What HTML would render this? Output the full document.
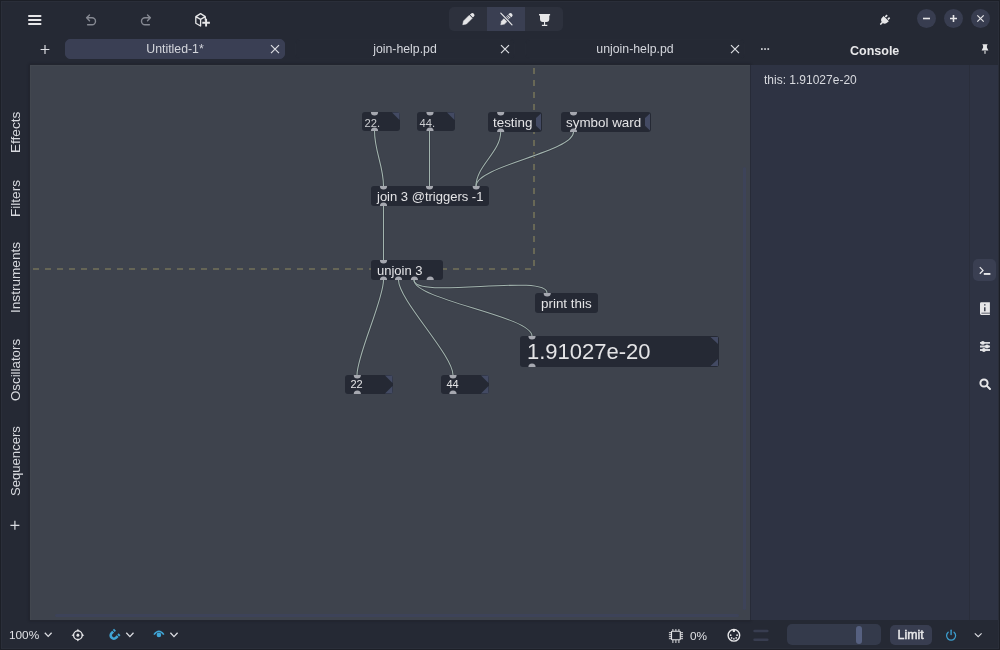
<!DOCTYPE html>
<html><head><meta charset="utf-8">
<style>
*{margin:0;padding:0;box-sizing:border-box}
html,body{width:1000px;height:650px;overflow:hidden;background:#252934;-webkit-font-smoothing:antialiased;font-family:"Liberation Sans",sans-serif;color:#e2e2e4}
.abs{position:absolute;white-space:nowrap}
#frame{position:absolute;left:0;top:0;width:1000px;height:650px;border:1px solid #1c1f27;box-shadow:inset 0 0 0 1px #2a2e39;pointer-events:none}
.tab{position:absolute;top:39px;height:20px;border-radius:5px;font-size:12.3px;line-height:18px;text-align:center;color:#d4d6dc}
.tab.act{background:#3a3f54}
.vt{position:absolute;font-size:13.6px;line-height:13px;color:#d8dadf;transform:rotate(-90deg);transform-origin:0 0;white-space:nowrap}
.obj{position:absolute;background:#252934;border-radius:3px;font-size:13px;color:#e4e4e6;white-space:nowrap}
svg{position:absolute;left:0;top:0}
</style></head><body><div id="root" style="position:absolute;left:0;top:0;width:1000px;height:650px;will-change:transform">
<!-- canvas -->
<div class="abs" style="left:30px;top:65px;width:720px;height:555px;background:#3e434d;box-shadow:0 0 0 1px #22252f,0 0 2px 1px rgba(20,22,30,.5),inset 1px 1px 0 #42474f"></div>
<!-- console -->
<div class="abs" style="left:750px;top:65px;width:220px;height:555px;background:#2e3343;box-shadow:inset 1px 0 0 #272b38"></div>
<div class="abs" style="left:969px;top:65px;width:31px;height:555px;background:#2e3343;border-left:1px solid #2a2e3b"></div>
<!-- scrollbars -->
<div class="abs" style="left:743px;top:167px;width:3px;height:443px;border-radius:2px;background:#3d4359"></div>
<div class="abs" style="left:55px;top:614px;width:684px;height:3px;border-radius:2px;background:#3d4359"></div>

<!-- mode group -->
<div class="abs" style="left:449px;top:7px;width:114px;height:24px;border-radius:5px;background:#2d313d"></div>
<div class="abs" style="left:487px;top:7px;width:38px;height:24px;background:#3a3f52"></div>
<!-- window buttons -->
<div class="abs" style="left:917px;top:9px;width:19px;height:19px;border-radius:50%;background:#383d50"></div>
<div class="abs" style="left:944px;top:9px;width:19px;height:19px;border-radius:50%;background:#383d50"></div>
<div class="abs" style="left:971px;top:9px;width:19px;height:19px;border-radius:50%;background:#383d50"></div>

<!-- tabs -->
<div class="tab act" style="left:65px;width:220px;border:1px solid #3a3f54">Untitled-1*</div>
<div class="tab" style="left:295px;width:220px;border:1px solid #262a35">join-help.pd</div>
<div class="tab" style="left:525px;width:220px;border:1px solid #262a35">unjoin-help.pd</div>

<!-- sidebar -->
<div class="vt" style="top:153px;left:8.5px">Effects</div>
<div class="vt" style="top:217px;left:8.5px">Filters</div>
<div class="vt" style="top:313px;left:8.5px">Instruments</div>
<div class="vt" style="top:401px;left:8.5px;font-size:13.3px">Oscillators</div>
<div class="vt" style="top:496px;left:8.5px;font-size:13.1px">Sequencers</div>

<!-- console -->
<div class="abs" style="left:850px;top:43.5px;font-size:12.5px;font-weight:bold;color:#e8e8ea">Console</div>
<div class="abs" style="left:764px;top:73px;font-size:12px;color:#d8dadf">this: 1.91027e-20</div>

<!-- right strip active -->
<div class="abs" style="left:973px;top:259px;width:23px;height:22px;border-radius:5px;background:#3a3f52"></div>

<!-- status -->
<div class="abs" style="left:9px;top:628px;font-size:11.8px;color:#dfe0e4">100%</div>
<div class="abs" style="left:690px;top:629px;font-size:11.8px;color:#dfe0e4">0%</div>
<div class="abs" style="left:787px;top:624px;width:94px;height:21px;border-radius:5px;background:#343a4b"></div>
<div class="abs" style="left:856px;top:626px;width:6px;height:18px;border-radius:3px;background:#566080"></div>
<div class="abs" style="left:890px;top:625px;width:42px;height:20px;border-radius:5px;background:#383d50"></div>
<div class="abs" style="left:897.5px;top:628px;font-size:12.4px;-webkit-text-stroke:0.45px #e8e8ea;color:#e8e8ea">Limit</div>

<svg width="1000" height="650" viewBox="0 0 1000 650">
 <!-- dashed border -->
 <path d="M30 269 H534 V65" fill="none" stroke="#737259" stroke-width="1.6" stroke-dasharray="6 6" stroke-dashoffset="9"/>
 <!-- cords -->
 <g fill="none" stroke-linecap="round">
  <g stroke="#363a44" stroke-width="2.4">
   <path d="M374.5 131 C374.5 151 383.5 166 383.5 186"/>
   <path d="M429.5 131 V186"/>
   <path d="M500.7 132 C500.7 152 476 166 476 186"/>
   <path d="M573.5 132 C573.5 152 476 166 476 186"/>
   <path d="M383.5 206 V260"/>
   <path d="M383.5 280 C383.5 300 357 355 357 375"/>
   <path d="M398.5 280 C398.5 300 453 355 453 375"/>
   <path d="M414 280 C414 300 547 273 547 293"/>
   <path d="M414 280 C414 300 532 316 532 336"/>
  </g>
  <g stroke="#a2b4ae" stroke-width="1.05">
   <path d="M374.5 131 C374.5 151 383.5 166 383.5 186"/>
   <path d="M429.5 131 V186"/>
   <path d="M500.7 132 C500.7 152 476 166 476 186"/>
   <path d="M573.5 132 C573.5 152 476 166 476 186"/>
   <path d="M383.5 206 V260"/>
   <path d="M383.5 280 C383.5 300 357 355 357 375"/>
   <path d="M398.5 280 C398.5 300 453 355 453 375"/>
   <path d="M414 280 C414 300 547 273 547 293"/>
   <path d="M414 280 C414 300 532 316 532 336"/>
  </g>
 </g>
 </svg>
<!-- patch objects -->
<div class="obj" style="left:362px;top:112px;width:38px;height:19px"></div>
<div class="obj" style="left:417px;top:112px;width:38px;height:19px"></div>
<div class="obj" style="left:488px;top:112px;width:54px;height:20px"></div>
<div class="obj" style="left:561px;top:112px;width:90px;height:20px"></div>
<div class="obj" style="left:371px;top:186px;width:118px;height:20px"></div>
<div class="obj" style="left:371px;top:260px;width:72px;height:20px"></div>
<div class="obj" style="left:535px;top:293px;width:63px;height:20px"></div>
<div class="obj" style="left:520px;top:336px;width:199px;height:31px"></div>
<div class="obj" style="left:345px;top:375px;width:48px;height:19px"></div>
<div class="obj" style="left:441px;top:375px;width:48px;height:19px"></div>

<div class="abs" style="left:364.5px;top:116.5px;font-size:11.2px;color:#cbccd0">22.</div>
<div class="abs" style="left:419.5px;top:116.5px;font-size:11.2px;color:#cbccd0">44.</div>
<div class="abs" style="left:493px;top:115px;font-size:13.4px;color:#e4e4e6">testing</div>
<div class="abs" style="left:566px;top:115px;font-size:13.4px;color:#e4e4e6">symbol ward</div>
<div class="abs" style="left:377px;top:189px;font-size:13px;color:#e4e4e6">join 3 @triggers -1</div>
<div class="abs" style="left:377px;top:263px;font-size:13px;color:#e4e4e6">unjoin 3</div>
<div class="abs" style="left:541px;top:296px;font-size:13.4px;color:#e4e4e6">print this</div>
<div class="abs" style="left:527px;top:339px;font-size:22px;color:#e4e4e6">1.91027e-20</div>
<div class="abs" style="left:350.5px;top:378px;font-size:11px;color:#e4e4e6">22</div>
<div class="abs" style="left:446.5px;top:378px;font-size:11px;color:#e4e4e6">44</div>



<svg width="1000" height="650" viewBox="0 0 1000 650">
 <g fill="#a6a8b0">
  <path d="M370.9 112 h7.2 a3.6 3.6 0 0 1 -7.2 0z"/><path d="M370.9 131 h7.2 a3.6 3.6 0 0 0 -7.2 0z"/><path d="M426.4 112 h7.2 a3.6 3.6 0 0 1 -7.2 0z"/><path d="M426.4 131 h7.2 a3.6 3.6 0 0 0 -7.2 0z"/><path d="M497.1 112 h7.2 a3.6 3.6 0 0 1 -7.2 0z"/><path d="M497.1 132 h7.2 a3.6 3.6 0 0 0 -7.2 0z"/><path d="M569.9 112 h7.2 a3.6 3.6 0 0 1 -7.2 0z"/><path d="M569.9 132 h7.2 a3.6 3.6 0 0 0 -7.2 0z"/><path d="M379.9 186 h7.2 a3.6 3.6 0 0 1 -7.2 0z"/><path d="M425.9 186 h7.2 a3.6 3.6 0 0 1 -7.2 0z"/><path d="M472.6 186 h7.2 a3.6 3.6 0 0 1 -7.2 0z"/><path d="M379.9 206 h7.2 a3.6 3.6 0 0 0 -7.2 0z"/><path d="M379.9 260 h7.2 a3.6 3.6 0 0 1 -7.2 0z"/><path d="M379.9 280 h7.2 a3.6 3.6 0 0 0 -7.2 0z"/><path d="M394.9 280 h7.2 a3.6 3.6 0 0 0 -7.2 0z"/><path d="M410.8 280 h7.2 a3.6 3.6 0 0 0 -7.2 0z"/><path d="M426.6 280 h7.2 a3.6 3.6 0 0 0 -7.2 0z"/><path d="M543.6 293 h7.2 a3.6 3.6 0 0 1 -7.2 0z"/><path d="M528.4 336 h7.2 a3.6 3.6 0 0 1 -7.2 0z"/><path d="M528.4 367 h7.2 a3.6 3.6 0 0 0 -7.2 0z"/><path d="M353.7 375 h7.2 a3.6 3.6 0 0 1 -7.2 0z"/><path d="M353.7 394 h7.2 a3.6 3.6 0 0 0 -7.2 0z"/><path d="M449.4 375 h7.2 a3.6 3.6 0 0 1 -7.2 0z"/><path d="M449.4 394 h7.2 a3.6 3.6 0 0 0 -7.2 0z"/>
 </g>
 <!-- atom triangles -->
 <g fill="#434a63">
  <path d="M392 112.5 H399.5 V120 Z"/>
  <path d="M447 112.5 H454.5 V120 Z"/>
  <path d="M541 113.6 L536 118 V125.8 L541 130.4 Z"/>
  <path d="M650 113.6 L645 118 V125.8 L650 130.4 Z"/>
  <path d="M710.5 337 H718 V344 Z"/>
  <path d="M718 359 V366 H710.5 Z"/>
  <path d="M385 375.5 H392.5 V383 Z"/>
  <path d="M392.5 386 V393.5 H385 Z"/>
  <path d="M481 375.5 H488.5 V383 Z"/>
  <path d="M488.5 386 V393.5 H481 Z"/>
 </g>
 <!-- hamburger -->
 <g stroke="#e6e6e8" stroke-width="2" stroke-linecap="round">
  <path d="M29 16 H40.5 M29 20 H40.5 M29 24 H40.5"/>
 </g>
 <!-- undo / redo -->
 <g fill="none" stroke="#868992" stroke-width="1.4" stroke-linecap="round" stroke-linejoin="round">
  <path d="M89.5 14.9 L86.6 17.8 L89.5 20.7 M86.6 17.8 H92 A3.5 3.5 0 0 1 92 24.8 H87.6"/>
  <path d="M147.5 14.9 L150.4 17.8 L147.5 20.7 M150.4 17.8 H145 A3.5 3.5 0 0 0 145 24.8 H149.4"/>
 </g>
 <!-- add object -->
 <g fill="none" stroke="#e6e6e8" stroke-width="1.3" stroke-linejoin="round">
  <path d="M200.6 13.6 L195.8 16.6 L200.6 19.4 L205.3 16.6 Z M195.8 16.6 V23.2 L200.6 26 V19.4 M205.3 16.6 V20.5"/>
 </g>
 <path d="M202.3 22.8 H209.9 M206.1 18.8 V26.6" stroke="#e6e6e8" stroke-width="1.9"/>
 <!-- pencil -->
 <g transform="translate(468.5 19) rotate(-45)" fill="#e6e6e8">
  <path d="M-8.1 0 L-5 -2.1 H3.2 V2.1 H-5 Z" stroke="#e6e6e8" stroke-width="0.5" stroke-linejoin="round"/>
  <path d="M4.1 -2.1 H5.5 A2.1 2.1 0 0 1 5.5 2.1 H4.1 Z"/>
 </g>
 <!-- crossed pencil -->
 <g transform="translate(506.5 19.1) rotate(-45)" fill="#e6e6e8">
  <path d="M-8.1 0 L-5 -2.1 H0 V2.1 H-5 Z" stroke="#e6e6e8" stroke-width="0.5" stroke-linejoin="round"/>
  <path d="M0.8 -2 H2 V2 H0.8 Z M2.8 -2 H3.8 V2 H2.8Z"/>
  <path d="M4.6 -2.1 H5.6 A2.1 2.1 0 0 1 5.6 2.1 H4.6 Z"/>
 </g>
 <path d="M500.8 13.1 L512 24.8" stroke="#3a3f52" stroke-width="2.8"/>
 <path d="M500.8 13.1 L512 24.8" stroke="#e6e6e8" stroke-width="1.2" stroke-linecap="round"/>
 <!-- presentation cup -->
 <path fill="#e6e6e8" d="M539 13.9 H550.1 V15.6 H549.3 V19 Q549.3 21.9 546.4 21.9 H545.1 V24.8 H547.3 V26 H541.9 V24.8 H544 V21.9 H542.9 Q540 21.9 540 19 V15.6 H539 Z"/>
 <!-- plug -->
 <g transform="translate(884.9 19.9) rotate(45)" fill="#e6e6e8">
  <path d="M-3.7 -1.9 H3.7 V-0.2 A3.7 3.9 0 0 1 -3.7 -0.2 Z"/>
  <rect x="-2.6" y="-5" width="1.7" height="2.6" rx="0.4"/>
  <rect x="0.9" y="-5" width="1.7" height="2.6" rx="0.4"/>
  <rect x="-0.8" y="3" width="1.6" height="3.6" rx="0.5"/>
 </g>
 <!-- window buttons -->
 <g stroke="#e6e6e8" stroke-width="1.6">
  <path d="M923 18.5 H930"/>
  <path d="M950 18.5 H957 M953.5 15 V22"/>
  <path d="M977.3 15.3 L983.7 21.7 M983.7 15.3 L977.3 21.7" stroke-width="1.2"/>
 </g>
 <!-- tab plus & closes -->
 <g stroke="#dcdde2" stroke-width="1.2">
  <path d="M40.6 49.5 H49.4 M45 45 V54"/>
  <path d="M271 45.2 L279 53.2 M279 45.2 L271 53.2"/>
  <path d="M501 45.2 L509 53.2 M509 45.2 L501 53.2"/>
  <path d="M731 45.2 L739 53.2 M739 45.2 L731 53.2"/>
 </g>
 <!-- ... -->
 <g fill="#d6d7db"><rect x="761" y="48.2" width="1.7" height="1.7"/><rect x="764.2" y="48.2" width="1.7" height="1.7"/><rect x="767.4" y="48.2" width="1.7" height="1.7"/></g>
 <!-- pin -->
 <path fill="#e6e6e8" d="M982.3 44.2 H987.7 L986.9 45.8 V47.6 L988.4 50.6 H981.6 L983.1 47.6 V45.8 Z"/>
 <rect x="984.3" y="50.8" width="1.4" height="3" fill="#bfc0c4"/>
 <!-- sidebar plus -->
 <path d="M10.4 525.3 H19.4 M14.9 520.8 V529.8" stroke="#dcdde2" stroke-width="1.2"/>
 <!-- terminal -->
 <path d="M979.8 267.1 L983 270.4 L979.8 273.7" fill="none" stroke="#e6e6e8" stroke-width="1.3"/>
 <rect x="983.8" y="273" width="6.6" height="1.9" fill="#e6e6e8"/>
 <!-- info book -->
 <path fill="#e6e6e8" fill-rule="evenodd" d="M980 303.5 Q980 302.2 981.3 302.2 H989.9 V312.8 H981.4 V313.6 H989.9 V315 H981.3 Q980 315 980 313.6 Z M984.1 304.2 h1.4 v1.4 h-1.4z M984.1 307.2 h1.4 v4 h-1.4z"/>
 <!-- sliders -->
 <g stroke="#d8d9dd" stroke-width="1.9"><path d="M980 342.9 H990 M980 346.5 H990 M980 350 H990"/></g>
 <g fill="#e6e6e8"><circle cx="982.8" cy="342.9" r="1.9"/><circle cx="987" cy="346.5" r="1.9"/><circle cx="983.9" cy="350" r="1.9"/></g>
 <!-- search -->
 <circle cx="984" cy="383" r="3.6" fill="none" stroke="#e6e6e8" stroke-width="2"/>
 <path d="M986.6 385.6 L990 389" stroke="#e6e6e8" stroke-width="2" stroke-linecap="round"/>
 <!-- status: zoom chevron -->
 <g fill="none" stroke="#dcdde2" stroke-width="1.3">
  <path d="M44.8 632.8 L48.2 636.4 L51.6 632.8"/>
  <path d="M126.3 632.8 L129.9 636.6 L133.5 632.8"/>
  <path d="M170.4 632.8 L174 636.6 L177.6 632.8"/>
  <path d="M974.8 633.3 L978.2 636.6 L981.6 633.3" stroke-width="1.15"/>
 </g>
 <!-- crosshair -->
 <circle cx="77.9" cy="635.2" r="4.3" fill="none" stroke="#e6e6e8" stroke-width="1.3"/>
 <ellipse cx="77.9" cy="635.2" rx="1.4" ry="1.6" fill="#e6e6e8"/>
 <path fill="#e6e6e8" d="M76.5 631.2 L77.9 628.8 L79.3 631.2Z M76.5 639.2 L77.9 641.6 L79.3 639.2Z M73.9 633.8 L71.5 635.2 L73.9 636.6Z M81.9 633.8 L84.3 635.2 L81.9 636.6Z"/>
 <!-- magnet -->
 <g transform="translate(114.3 635) rotate(45)" fill="#40a5d6">
  <path d="M-4.5 -1.6 V0.6 A4.5 4.5 0 0 0 4.5 0.6 V-1.6 H1.9 V0.6 A1.9 1.9 0 0 1 -1.9 0.6 V-1.6 Z"/>
  <rect x="-4.5" y="-4.2" width="2.6" height="1.8"/>
  <rect x="1.9" y="-4.2" width="2.6" height="1.8"/>
 </g>
 <!-- eye -->
 <path d="M154 634.6 Q158.9 627.8 163.8 634.6" fill="none" stroke="#40a5d6" stroke-width="1.6"/>
 <circle cx="158.9" cy="634.9" r="2.3" fill="#40a5d6"/>
 <!-- cpu -->
 <rect x="671.5" y="631.2" width="8.8" height="8.5" rx="0.8" fill="none" stroke="#e6e6e8" stroke-width="1.15"/>
 <path stroke="#e6e6e8" stroke-width="0.95" d="M672.9 629 V631 M675.9 629 V631 M678.9 629 V631 M672.9 640 V643 M675.9 640 V643 M678.9 640 V643 M668.9 632.7 H671 M668.9 634.7 H671 M668.9 636.7 H671 M668.9 638.7 H671 M680.8 632.7 H683 M680.8 634.7 H683 M680.8 636.7 H683 M680.8 638.7 H683"/>
 <!-- midi -->
 <circle cx="733.9" cy="635.3" r="5.8" fill="none" stroke="#e6e6e8" stroke-width="1.4"/>
 <path fill="#e6e6e8" d="M732.5 629.8 H735.3 L734.8 631.9 H733 Z"/>
 <g fill="#e6e6e8"><circle cx="730.7" cy="635.2" r="0.85"/><circle cx="737.1" cy="635.2" r="0.85"/><circle cx="731.6" cy="637.9" r="0.85"/><circle cx="736.2" cy="637.9" r="0.85"/><circle cx="733.9" cy="638.8" r="0.85"/></g>
 <!-- meter bars -->
 <path d="M754.6 631 H767.3 M754.6 639.7 H767.3" stroke="#383d50" stroke-width="2.6" stroke-linecap="round"/>
 <!-- power -->
 <path d="M948.2 632.2 A4.5 4.5 0 1 0 954 632.2" fill="none" stroke="#3c9ecf" stroke-width="1.25" stroke-linecap="round"/>
 <path d="M951.1 630.3 V634.6" stroke="#3c9ecf" stroke-width="1.4" stroke-linecap="round"/>
</svg>
<div id="frame"></div>
</div></body></html>
